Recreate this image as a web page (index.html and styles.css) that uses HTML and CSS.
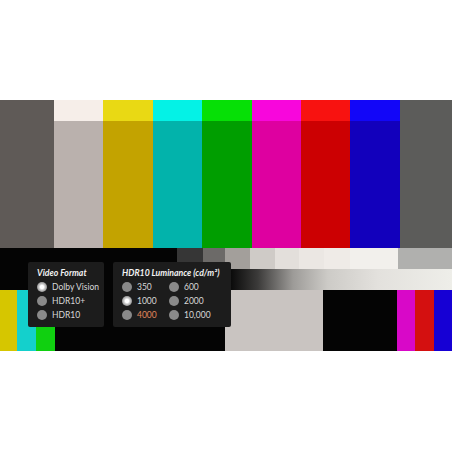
FILE: index.html
```html
<!DOCTYPE html>
<html>
<head>
<meta charset="utf-8">
<link rel="stylesheet" href="styles.css">
</head>
<body>
<div class="pattern">
  <div class="row top-strip">
    <div class="c-gray"></div><div class="c-white-hi"></div><div class="c-yellow-hi"></div><div class="c-cyan-hi"></div><div class="c-green-hi"></div><div class="c-magenta-hi"></div><div class="c-red-hi"></div><div class="c-blue-hi"></div><div class="c-gray2"></div>
  </div>
  <div class="row main-bars">
    <div class="c-gray"></div><div class="c-white"></div><div class="c-yellow"></div><div class="c-cyan"></div><div class="c-green"></div><div class="c-magenta"></div><div class="c-red"></div><div class="c-blue"></div><div class="c-gray2"></div>
  </div>
  <div class="row steps">
    <div class="s0"></div><div class="s1"></div><div class="s2"></div><div class="s3"></div><div class="s4"></div><div class="s5"></div><div class="s6"></div><div class="s7"></div><div class="s8"></div><div class="s9"></div>
  </div>
  <div class="row ramp">
    <div class="ramp-black"></div><div class="ramp-grad"></div>
  </div>
  <div class="row bottom">
    <div class="b-yellow"></div><div class="b-cyan"></div><div class="b-green"></div><div class="b-black"></div><div class="b-light"></div><div class="b-black2"></div><div class="b-magenta"></div><div class="b-red"></div><div class="b-blue"></div>
  </div>

  <div class="menus">
    <div class="panel panel-format">
      <div class="title">Video Format</div>
      <div class="opt"><span class="radio on"></span>Dolby Vision</div>
      <div class="opt"><span class="radio"></span>HDR10+</div>
      <div class="opt"><span class="radio"></span>HDR10</div>
    </div>
    <div class="panel panel-lum">
      <div class="title">HDR10 Luminance (cd/m²)</div>
      <div class="grid">
        <div class="opt"><span class="radio"></span>350</div>
        <div class="opt"><span class="radio"></span>600</div>
        <div class="opt"><span class="radio on"></span>1000</div>
        <div class="opt"><span class="radio"></span>2000</div>
        <div class="opt hot"><span class="radio"></span>4000</div>
        <div class="opt"><span class="radio"></span>10,000</div>
      </div>
    </div>
  </div>
</div>
</body>
</html>
```
FILE: styles.css
```css
html, body {
  margin: 0;
  padding: 0;
  background: #ffffff;
}
body {
  width: 452px;
  height: 452px;
  padding-top: 100px;
  box-sizing: border-box;
  font-family: Lato, "Open Sans", sans-serif;
}
.pattern {
  position: relative;
  width: 452px;
  display: flex;
  flex-direction: column;
}
.row {
  display: grid;
}
.top-strip, .main-bars {
  grid-template-columns: 54px 49px 50px 49px 50px 49px 49px 50px 52px;
}
.top-strip { height: 21px; }
.main-bars { height: 127px; }

.c-gray { background: #5f5a57; }
.c-gray2 { background: #5c5c5a; }
.c-white-hi { background: #f6eee9; }
.c-yellow-hi { background: #e9d914; }
.c-cyan-hi { background: #04f2e6; }
.c-green-hi { background: #06e006; }
.c-magenta-hi { background: #f806dc; }
.c-red-hi { background: #f81210; }
.c-blue-hi { background: #1206f8; }

.c-white { background: #bab1ad; }
.c-yellow { background: #c3a300; }
.c-cyan { background: #02b3ab; }
.c-green { background: #009e00; }
.c-magenta { background: #de00a0; }
.c-red { background: #cc0002; }
.c-blue { background: #1200bc; }

.steps {
  height: 21px;
  grid-template-columns: 177px 26px 22px 25px 25px 24px 25px 26px 48px 54px;
}
.s0 { background: #040404; }
.s1 { background: #363636; }
.s2 { background: #6c6a68; }
.s3 { background: #a39f9b; }
.s4 { background: #cfcbc7; }
.s5 { background: #e3dfdb; }
.s6 { background: #ebe7e3; }
.s7 { background: #efebe7; }
.s8 { background: #f2f0ec; }
.s9 { background: #b0b0ae; }

.ramp {
  height: 21px;
  grid-template-columns: 228px 1fr;
}
.ramp-black { background: #040404; }
.ramp-grad {
  background: linear-gradient(to right, #050505 0px, #3c3b3a 30px, #9d9b98 65px, #cdcbc7 100px, #e3e1dd 150px, #eeeee9 224px);
}

.bottom {
  height: 61px;
  grid-template-columns: 17px 19px 19px 170px 98px 74px 18px 19px 18px;
}
.b-yellow { background: #d6c600; }
.b-cyan { background: #14d0cc; }
.b-green { background: #10d010; }
.b-black { background: #040404; }
.b-light { background: #c9c4c1; }
.b-black2 { background: #040404; }
.b-magenta { background: #d808c8; }
.b-red { background: #d41010; }
.b-blue { background: #1600d4; }

/* overlay menus */
.menus {
  position: absolute;
  left: 28px;
  top: 162px;
  display: flex;
  gap: 9px;
}
.panel {
  background: #1c1c1c;
  height: 65px;
  box-sizing: border-box;
  padding: 4px 0 0 9px;
  border-radius: 2px;
}
.panel-format { width: 76px; }
.panel-lum { width: 118px; padding-left: 9px; }
.title {
  height: 14px;
  line-height: 14px;
  font-size: 8.7px;
  font-weight: bold;
  font-style: italic;
  color: #f2f2f2;
  white-space: nowrap;
}
.opt {
  height: 14px;
  display: flex;
  align-items: center;
  gap: 5px;
  font-size: 8.5px;
  color: #d8d8d8;
  white-space: nowrap;
}
.grid {
  display: grid;
  grid-template-columns: 47px auto;
}
.radio {
  width: 10px;
  height: 10px;
  border-radius: 50%;
  background: #8a8a8a;
  flex: none;
}
.radio.on {
  background: radial-gradient(circle closest-side, #ffffff 0 35%, #d6d6d6 55%, #a8a8a8 85%, #9a9a9a 100%);
}
.hot { color: #e0885c; }
```
